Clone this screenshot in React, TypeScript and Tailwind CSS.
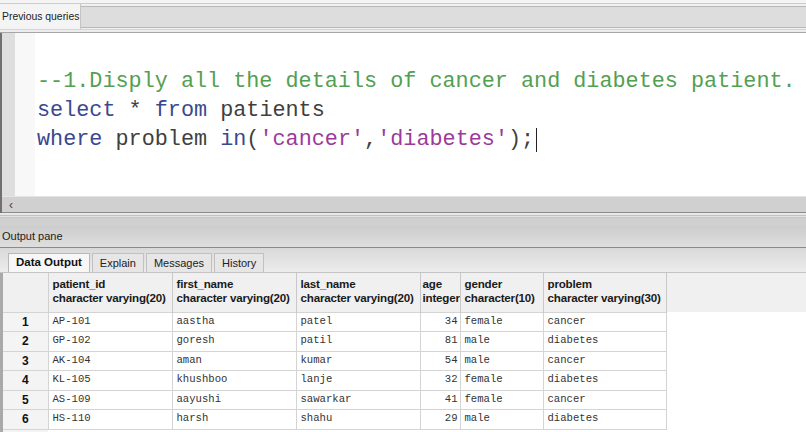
import React from 'react';

const rows = [
  ['AP-101', 'aastha', 'patel', '34', 'female', 'cancer'],
  ['GP-102', 'goresh', 'patil', '81', 'male', 'diabetes'],
  ['AK-104', 'aman', 'kumar', '54', 'male', 'cancer'],
  ['KL-105', 'khushboo', 'lanje', '32', 'female', 'diabetes'],
  ['AS-109', 'aayushi', 'sawarkar', '41', 'female', 'cancer'],
  ['HS-110', 'harsh', 'shahu', '29', 'male', 'diabetes'],
];

const cols = [
  { name: 'patient_id', type: 'character varying(20)', w: 'w-[124px]', pad: 'pl-[4px]' },
  { name: 'first_name', type: 'character varying(20)', w: 'w-[124px]', pad: 'pl-[4px]' },
  { name: 'last_name', type: 'character varying(20)', w: 'w-[124px]', pad: 'pl-[4px]' },
  { name: 'age', type: 'integer', w: 'w-[40px]', pad: 'pl-[2px]' },
  { name: 'gender', type: 'character(10)', w: 'w-[83px]', pad: 'pl-[4px]' },
  { name: 'problem', type: 'character varying(30)', w: 'w-[123px]', pad: 'pl-[4px]' },
];

const tabs = ['Data Output', 'Explain', 'Messages', 'History'];

function TopBar() {
  return (
    <div className="flex flex-col h-[33px] shrink-0">
      <div className="h-[4px] bg-[#f4f4f4] border-b border-[#cccccc]" />
      <div className="flex h-[25px]">
        <div className="w-[81px] bg-[#f4f4f4] border-r border-[#c4c4c4] flex items-center pl-[2px] text-[10.4px] text-[#222] whitespace-nowrap">
          Previous queries
        </div>
        <div className="flex-1 mt-[2px] mb-[1px] bg-[#dddddd] border-y border-[#b8b8b8]" />
      </div>
      <div className="h-[4px] bg-[#ececec] border-t border-[#d4d4d4] border-b border-b-[#a6a6a6]" />
    </div>
  );
}

function Editor() {
  const kw = 'text-[#3a4890]';
  const str = 'text-[#9b3a9b]';
  const plain = 'text-[#404040]';
  return (
    <div className="flex flex-col h-[180px] shrink-0 border-l-2 border-[#707070]">
      <div className="flex flex-1 min-h-0">
        <div className="w-[13px] bg-[#dedede]" />
        <div className="w-[20px] bg-[#f8f8f8]" />
        <div className="flex-1 bg-white pt-[34px] pl-[2px] font-['Liberation_Mono',monospace] text-[21.8px] leading-[29px] whitespace-pre">
          <div className="text-[#52a052]">--1.Disply all the details of cancer and diabetes patient.</div>
          <div>
            <span className={kw}>select</span>
            <span className={plain}> * </span>
            <span className={kw}>from</span>
            <span className={plain}> patients</span>
          </div>
          <div className="flex items-center">
            <span className={kw}>where</span>
            <span className={plain}> problem </span>
            <span className={kw}>in</span>
            <span className={plain}>(</span>
            <span className={str}>'cancer'</span>
            <span className={plain}>,</span>
            <span className={str}>'diabetes'</span>
            <span className={plain}>);</span>
            <span className="inline-block w-[1px] h-[24px] bg-[#222] ml-[2px]" />
          </div>
        </div>
      </div>
      <div className="h-[17px] bg-[#d0d0d0] border-t border-[#e4e4e4] border-b border-b-[#8c8c8c] flex items-center">
        <span className="w-[18px] text-center text-[12px] text-[#444] leading-none">‹</span>
      </div>
    </div>
  );
}

function Splitter() {
  return (
    <div className="flex flex-col shrink-0">
      <div className="h-[2px] bg-[#e8e8e8]" />
      <div className="h-[1px] bg-[#c0c0c0]" />
      <div className="h-[1px] bg-[#e2e2e2]" />
      <div className="h-[1px] bg-[#c6c6c6]" />
      <div className="h-[8px] bg-[#d0d0d0]" />
      <div className="h-[22px] bg-gradient-to-b from-[#cdcdcd] to-[#dedede] flex items-center pl-[2px] text-[11px] text-[#222] border-b border-[#8a8a8a]">
        Output pane
      </div>
    </div>
  );
}

function Tabs() {
  return (
    <div className="h-[25px] shrink-0 bg-gradient-to-b from-[#d9d9d9] to-[#ececec] flex items-end pl-[8px] gap-[2px] border-b border-[#c4c4c4]">
      {tabs.map((t, i) => (
        <div
          key={t}
          className={
            i === 0
              ? 'h-[19px] px-[7px] bg-[#f7f7f7] border border-b-0 border-[#b8b8b8] flex items-center text-[11.5px] font-bold text-[#111]'
              : 'h-[19px] px-[7px] bg-[#e6e6e6] border border-b-0 border-[#c0c0c0] flex items-center text-[11px] text-[#222]'
          }
        >
          {t}
        </div>
      ))}
    </div>
  );
}

function Grid() {
  return (
    <div className="flex-1 bg-white border-l-[3px] border-[#a9a9a9] overflow-hidden">
      <table className="table-fixed border-collapse w-full">
        <colgroup>
          <col className="w-[45px]" />
          {cols.map((c) => (
            <col key={c.name} className={c.w} />
          ))}
          <col />
        </colgroup>
        <thead>
          <tr className="h-[39px] bg-[#f0f0f0]">
            <th className="border-r border-[#d0d0d0]" />
            {cols.map((c) => (
              <th
                key={c.name}
                className={
                  'border-r border-[#c8c8c8] text-left align-top pt-[4px] text-[11.6px] leading-[14px] text-[#1a1a1a] whitespace-nowrap overflow-hidden tracking-[-0.2px] ' +
                  c.pad
                }
              >
                <div className="font-bold">{c.name}</div>
                <div className="font-bold">{c.type}</div>
              </th>
            ))}
            <th />
          </tr>
        </thead>
        <tbody>
          {rows.map((r, i) => (
            <tr key={i} className="h-[19.5px]">
              <td className="bg-[#f4f4f4] border border-l-0 border-[#d4d4d4] text-center font-bold text-[12px] text-[#111]">
                {i + 1}
              </td>
              {r.map((v, j) => (
                <td
                  key={j}
                  className={
                    'border border-[#d4d4d4] font-[\'Liberation_Mono\',monospace] text-[10.6px] text-[#333] px-[4px] whitespace-nowrap ' +
                    (j === 3 ? 'text-right pr-[2px]' : 'text-left')
                  }
                >
                  {v}
                </td>
              ))}
              <td />
            </tr>
          ))}
          <tr className="h-[6px]">
            <td className="bg-[#f4f4f4]" />
            <td colSpan={7} />
          </tr>
        </tbody>
      </table>
    </div>
  );
}

export default function App() {
  return (
    <div className="w-[806px] h-[432px] overflow-hidden flex flex-col bg-[#f0f0f0] font-['Liberation_Sans',Arial,sans-serif]">
      <TopBar />
      <Editor />
      <Splitter />
      <Tabs />
      <Grid />
    </div>
  );
}
